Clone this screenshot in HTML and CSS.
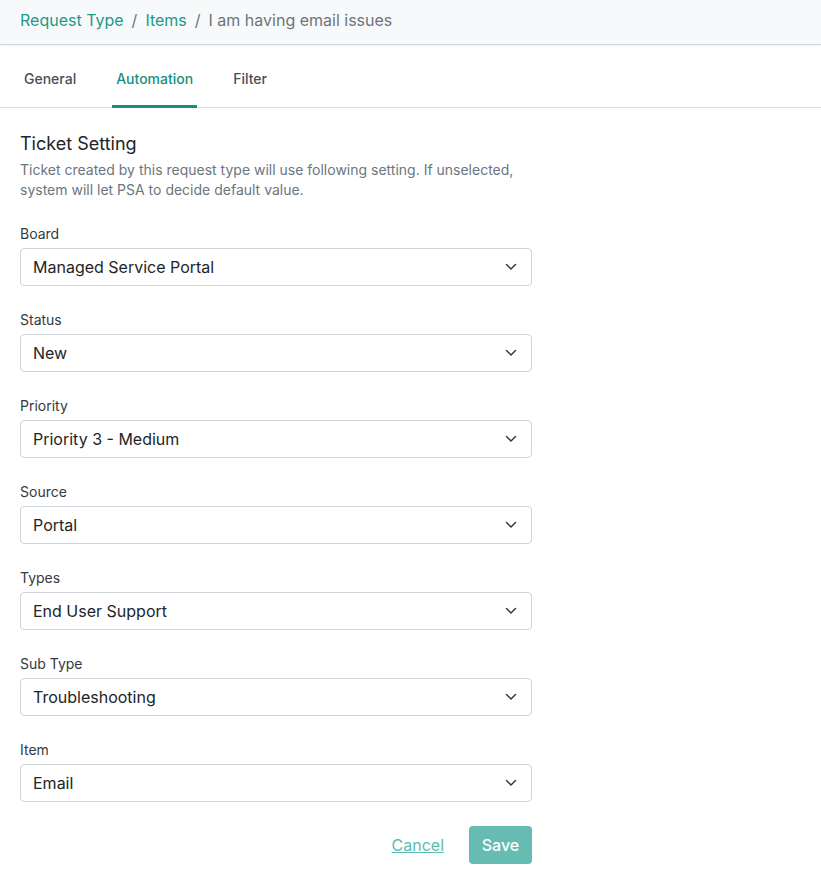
FILE: index.html
```html
<!DOCTYPE html>
<html>
<head>
<meta charset="utf-8">
<link rel="stylesheet" href="styles.css">
</head>
<body>
<header class="topbar">
  <nav class="crumbs">
    <a class="crumb-link">Request Type</a>
    <span class="sep">/</span>
    <a class="crumb-link">Items</a>
    <span class="sep">/</span>
    <span class="crumb-current">I am having email issues</span>
  </nav>
</header>
<div class="tabs">
  <div class="tab">General</div>
  <div class="tab active">Automation</div>
  <div class="tab">Filter</div>
</div>
<main class="content">
  <h2 class="title">Ticket Setting</h2>
  <p class="desc">Ticket created by this request type will use following setting. If unselected,<br>system will let PSA to decide default value.</p>

  <div class="field"><label class="label">Board</label><div class="select"><span>Managed Service Portal</span><svg class="chev" viewBox="0 0 12 8"><path d="M1.5 1.5l4.5 4.5 4.5-4.5"/></svg></div></div>
  <div class="field"><label class="label">Status</label><div class="select"><span>New</span><svg class="chev" viewBox="0 0 12 8"><path d="M1.5 1.5l4.5 4.5 4.5-4.5"/></svg></div></div>
  <div class="field"><label class="label">Priority</label><div class="select"><span>Priority 3 - Medium</span><svg class="chev" viewBox="0 0 12 8"><path d="M1.5 1.5l4.5 4.5 4.5-4.5"/></svg></div></div>
  <div class="field"><label class="label">Source</label><div class="select"><span>Portal</span><svg class="chev" viewBox="0 0 12 8"><path d="M1.5 1.5l4.5 4.5 4.5-4.5"/></svg></div></div>
  <div class="field"><label class="label">Types</label><div class="select"><span>End User Support</span><svg class="chev" viewBox="0 0 12 8"><path d="M1.5 1.5l4.5 4.5 4.5-4.5"/></svg></div></div>
  <div class="field"><label class="label">Sub Type</label><div class="select"><span>Troubleshooting</span><svg class="chev" viewBox="0 0 12 8"><path d="M1.5 1.5l4.5 4.5 4.5-4.5"/></svg></div></div>
  <div class="field"><label class="label">Item</label><div class="select"><span>Email</span><svg class="chev" viewBox="0 0 12 8"><path d="M1.5 1.5l4.5 4.5 4.5-4.5"/></svg></div></div>

  <div class="actions">
    <a class="cancel">Cancel</a>
    <button class="save">Save</button>
  </div>
</main>
</body>
</html>
```

FILE: styles.css
```css
* { box-sizing: border-box; }
body {
  margin: 0;
  font-family: Inter, "Noto Sans", "Liberation Sans", sans-serif;
  color: #212529;
  background: #fff;
}
.topbar {
  height: 45px;
  background: #f8f9fa;
  border-bottom: 1px solid #cfd4dc;
  box-shadow: 0 1px 3px rgba(0,0,0,0.06);
  padding: 10px 20px 0;
}
.crumbs {
  font-size: 16px;
  line-height: 20px;
  display: flex;
  gap: 8px;
}
.crumb-link { color: #1c9987; }
.sep { color: #6c757d; }
.crumb-current { color: #6c757d; }

.tabs {
  display: flex;
  gap: 32px;
  padding: 0 20px;
  border-bottom: 1px solid #d8dadd;
  height: 63px;
}
.tab {
  font-size: 14px;
  line-height: 20px;
  padding: 24px 4px 0;
  color: #495057;
  font-weight: 500;
  margin-bottom: -1px;
  border-bottom: 3px solid transparent;
}
.tab.active {
  color: #14907f;
  border-bottom-color: #14907f;
}

.content {
  padding: 24px 20px 20px;
  width: 552px;
}
.title {
  margin: 0;
  font-size: 18px;
  line-height: 24px;
  font-weight: 400;
  color: #212529;
}
.desc {
  margin: 4px 0 0;
  font-size: 14px;
  line-height: 20px;
  color: #6c757d;
}
.field {
  margin-top: 24px;
  display: flex;
  flex-direction: column;
}
.label {
  font-size: 14px;
  line-height: 20px;
  color: #343a40;
  font-weight: 400;
}
.select {
  margin-top: 4px;
  height: 38px;
  border: 1px solid #ced4da;
  border-radius: 4px;
  display: flex;
  align-items: center;
  justify-content: space-between;
  padding: 0 14px 0 12px;
  font-size: 16px;
  color: #212529;
}
.chev {
  width: 12px;
  height: 8px;
  fill: none;
  stroke: #343a40;
  stroke-width: 1.5;
  stroke-linecap: round;
  stroke-linejoin: round;
}
.actions {
  margin-top: 24px;
  display: flex;
  justify-content: flex-end;
  align-items: center;
  gap: 25px;
}
.cancel {
  font-size: 16px;
  color: #5cbbaf;
  text-decoration: underline;
}
.save {
  width: 63px;
  height: 38px;
  border: none;
  border-radius: 4px;
  background: #66bbb2;
  color: #fff;
  font-family: inherit;
  font-size: 16px;
  font-weight: 500;
}
```
